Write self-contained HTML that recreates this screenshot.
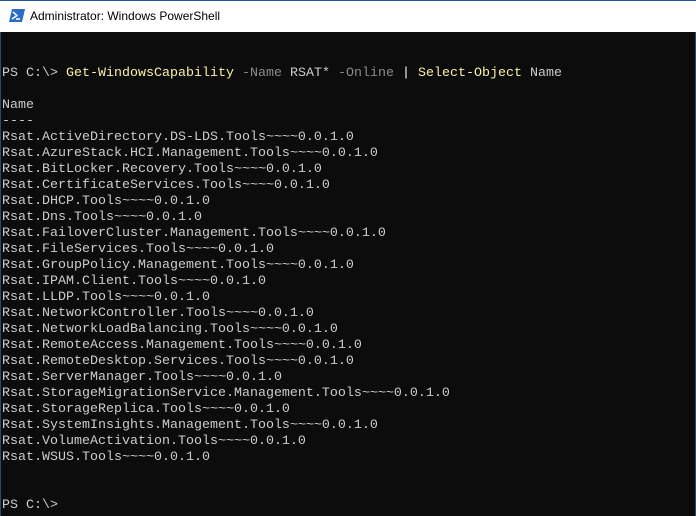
<!DOCTYPE html>
<html><head><meta charset="utf-8"><style>
*{margin:0;padding:0;box-sizing:border-box}
body{width:696px;height:516px;overflow:hidden;background:#0c0c0c;position:relative;font-family:"Liberation Sans",sans-serif}
.top{position:absolute;left:0;top:0;width:696px;height:1px;background:#1e5a96}
.tb{position:absolute;left:0;top:1px;width:696px;height:31px;background:#fff}
.tb span{position:absolute;left:30px;top:8px;font-size:12px;color:#000}
.lb{position:absolute;left:0;top:32px;width:1px;height:484px;background:#2a4a6a}
.rb{position:absolute;right:0;top:32px;width:1px;height:484px;background:#2a4a6a}
pre{position:absolute;left:2px;top:34px;font-family:"Liberation Mono",monospace;font-size:13.33px;line-height:16px;color:#cccccc}
.y{color:#f9f1a5}.g{color:#8a8a8a}.w{color:#fff}
</style></head><body>
<div class="top"></div>
<div class="tb">
<svg style="position:absolute;left:9px;top:8px" width="16" height="13" viewBox="0 0 16 13"><path d="M3 0H16L13 13H0Z" fill="#2c6bc9"/><path d="M4 3L8 6.5L3 10" stroke="#fff" stroke-width="1.5" fill="none"/><path d="M7 10H11" stroke="#fff" stroke-width="1.5"/></svg>
<span>Administrator: Windows PowerShell</span></div>
<div class="lb"></div><div class="rb"></div>
<pre>


PS C:\&gt; <span class="y">Get-WindowsCapability</span> <span class="g">-Name</span> RSAT* <span class="g">-Online</span> <span class="w">|</span> <span class="y">Select-Object</span> Name

Name
----
Rsat.ActiveDirectory.DS-LDS.Tools~~~~0.0.1.0
Rsat.AzureStack.HCI.Management.Tools~~~~0.0.1.0
Rsat.BitLocker.Recovery.Tools~~~~0.0.1.0
Rsat.CertificateServices.Tools~~~~0.0.1.0
Rsat.DHCP.Tools~~~~0.0.1.0
Rsat.Dns.Tools~~~~0.0.1.0
Rsat.FailoverCluster.Management.Tools~~~~0.0.1.0
Rsat.FileServices.Tools~~~~0.0.1.0
Rsat.GroupPolicy.Management.Tools~~~~0.0.1.0
Rsat.IPAM.Client.Tools~~~~0.0.1.0
Rsat.LLDP.Tools~~~~0.0.1.0
Rsat.NetworkController.Tools~~~~0.0.1.0
Rsat.NetworkLoadBalancing.Tools~~~~0.0.1.0
Rsat.RemoteAccess.Management.Tools~~~~0.0.1.0
Rsat.RemoteDesktop.Services.Tools~~~~0.0.1.0
Rsat.ServerManager.Tools~~~~0.0.1.0
Rsat.StorageMigrationService.Management.Tools~~~~0.0.1.0
Rsat.StorageReplica.Tools~~~~0.0.1.0
Rsat.SystemInsights.Management.Tools~~~~0.0.1.0
Rsat.VolumeActivation.Tools~~~~0.0.1.0
Rsat.WSUS.Tools~~~~0.0.1.0


PS C:\&gt;</pre>
</body></html>
